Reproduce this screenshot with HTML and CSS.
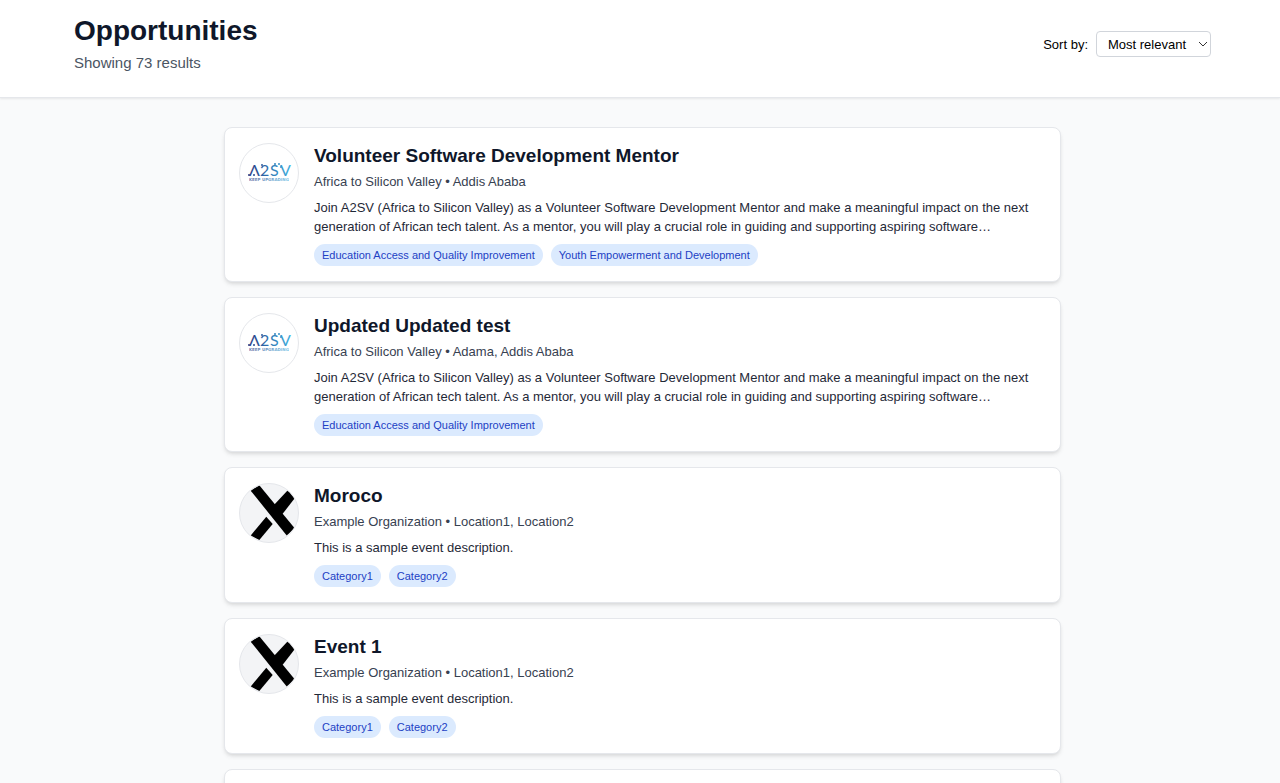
FILE: index.html
```html
<!DOCTYPE html>
<html lang="en">
<head>
<meta charset="utf-8">
<title>Opportunities</title>
<link rel="stylesheet" href="styles.css">
</head>
<body>
<svg class="defs" aria-hidden="true">
  <defs>
    <linearGradient id="brand" gradientUnits="userSpaceOnUse" x1="9" y1="0" x2="52" y2="0">
      <stop offset="0" stop-color="#2b3c85"/>
      <stop offset="0.5" stop-color="#2f78b5"/>
      <stop offset="1" stop-color="#45b4e2"/>
    </linearGradient>
    <symbol id="logo-a2sv" viewBox="0 0 58 58">
      <g fill="url(#brand)">
        <g class="wordmark">
          <text x="9" y="32">Λ</text>
          <text x="20" y="32">2</text>
          <text x="30" y="32">S</text>
          <text x="40" y="32">V</text>
        </g>
        <circle cx="9" cy="31" r="1"/>
        <circle cx="14" cy="31" r="1"/>
        <circle cx="22" cy="21" r="1"/>
        <circle cx="35" cy="20" r="1"/>
        <circle cx="39" cy="20" r="1"/>
        <circle cx="41" cy="23" r="1"/>
        <text class="tagline" x="9" y="37">KEEP UPGRADING</text>
      </g>
    </symbol>
    <symbol id="logo-x" viewBox="0 0 58 58">
      <path d="M10.7 6.7 19.3 1.3 54.7 44.3 46.7 51.4Z"/>
      <path d="M48 6 54.7 14.3 42.5 30 33 22Z"/>
      <path d="M26.3 32.7 32.7 40 19.3 56 10.7 51.4Z"/>
    </symbol>
  </defs>
</svg>
<header class="header">
  <div>
    <h1 class="heading">Opportunities</h1>
    <p class="count">Showing 73 results</p>
  </div>
  <div class="sort">
    <label for="sort">Sort by:</label>
    <div class="select-wrap">
      <select id="sort" class="select">
        <option>Most relevant</option>
        <option>Most recent</option>
      </select>
      <svg class="chevron" viewBox="0 0 10 6" aria-hidden="true"><path d="M1 1 5 5 9 1"/></svg>
    </div>
  </div>
</header>
<main class="list">
  <article class="card">
    <svg class="logo" role="img" aria-label="Africa to Silicon Valley"><use href="#logo-a2sv"/></svg>
    <div class="body">
      <h2 class="title">Volunteer Software Development Mentor</h2>
      <p class="org">Africa to Silicon Valley • Addis Ababa</p>
      <p class="desc">Join A2SV (Africa to Silicon Valley) as a Volunteer Software Development Mentor and make a meaningful impact on the next generation of African tech talent. As a mentor, you will play a crucial role in guiding and supporting aspiring software…</p>
      <div class="tags"><span class="tag">Education Access and Quality Improvement</span><span class="tag">Youth Empowerment and Development</span></div>
    </div>
  </article>
  <article class="card">
    <svg class="logo" role="img" aria-label="Africa to Silicon Valley"><use href="#logo-a2sv"/></svg>
    <div class="body">
      <h2 class="title">Updated Updated test</h2>
      <p class="org">Africa to Silicon Valley • Adama, Addis Ababa</p>
      <p class="desc">Join A2SV (Africa to Silicon Valley) as a Volunteer Software Development Mentor and make a meaningful impact on the next generation of African tech talent. As a mentor, you will play a crucial role in guiding and supporting aspiring software…</p>
      <div class="tags"><span class="tag">Education Access and Quality Improvement</span></div>
    </div>
  </article>
  <article class="card">
    <svg class="logo logo-grey" role="img" aria-label="Example Organization"><use href="#logo-x"/></svg>
    <div class="body">
      <h2 class="title">Moroco</h2>
      <p class="org">Example Organization • Location1, Location2</p>
      <p class="desc">This is a sample event description.</p>
      <div class="tags"><span class="tag">Category1</span><span class="tag">Category2</span></div>
    </div>
  </article>
  <article class="card">
    <svg class="logo logo-grey" role="img" aria-label="Example Organization"><use href="#logo-x"/></svg>
    <div class="body">
      <h2 class="title">Event 1</h2>
      <p class="org">Example Organization • Location1, Location2</p>
      <p class="desc">This is a sample event description.</p>
      <div class="tags"><span class="tag">Category1</span><span class="tag">Category2</span></div>
    </div>
  </article>
  <article class="card"></article>
</main>
</body>
</html>
```
FILE: styles.css
```css
* { box-sizing: border-box; }
body {
  margin: 0;
  height: 100vh;
  overflow: hidden;
  background: #f9fafb;
  color: #111827;
  font-family: "Liberation Sans", Arial, sans-serif;
  font-size: 13px;
}
h1, h2, p { margin: 0; }
.defs { position: absolute; width: 0; height: 0; }
.header {
  display: flex;
  justify-content: space-between;
  align-items: flex-start;
  padding: 14px 69px 22px 74px;
  background: #fff;
  border-bottom: 1px solid #e5e7eb;
  box-shadow: 0 1px 2px rgba(0, 0, 0, 0.08);
}
.heading { font-size: 28px; line-height: 34px; color: #0f172a; }
.count { margin-top: 3px; font-size: 15px; line-height: 24px; color: #4b5563; }
.sort { display: flex; align-items: center; gap: 8px; padding-top: 17px; color: #000; }
.select-wrap { position: relative; }
.select {
  display: block;
  appearance: none;
  width: 115px;
  height: 26px;
  padding: 0 20px 0 11px;
  border: 1px solid #d1d5db;
  border-radius: 4px;
  background: #fff;
  color: #000;
  font: inherit;
}
.chevron {
  position: absolute;
  right: 3px;
  top: 10px;
  width: 10px;
  height: 6px;
  fill: none;
  stroke: #333;
  pointer-events: none;
}
.list {
  display: flex;
  flex-direction: column;
  gap: 15px;
  max-width: 842px;
  margin: 0 auto;
  padding: 29px 0 30px 5px;
}
.card {
  display: flex;
  flex-shrink: 0;
  gap: 15px;
  min-height: 136px;
  padding: 14px 14px 15px;
  background: #fff;
  border: 1px solid #e5e7eb;
  border-radius: 8px;
  box-shadow: 0 3px 5px -1px rgba(0, 0, 0, 0.1), 0 2px 4px -2px rgba(0, 0, 0, 0.1);
}
.logo {
  flex: none;
  width: 60px;
  height: 60px;
  margin-top: 1px;
  border: 1px solid #e5e7eb;
  border-radius: 50%;
  background: #fff;
}
.logo-grey { background: #f3f4f6; }
.wordmark { font-family: Lato, sans-serif; font-size: 16px; }
.tagline { font-family: "DejaVu Sans", sans-serif; font-size: 4px; font-weight: 700; opacity: 0.7; }
.body { flex: 1; min-width: 0; }
.title { font-size: 19px; line-height: 27px; color: #0f172a; }
.org { margin-top: 4px; line-height: 18px; color: #374151; }
.desc { margin-top: 7px; line-height: 19px; color: #1f2937; }
.tags { display: flex; flex-wrap: wrap; gap: 8px; margin-top: 8px; }
.tag {
  padding: 0 8px;
  border-radius: 11px;
  background: #dbeafe;
  color: #1d3fc4;
  font-size: 11px;
  line-height: 22px;
}
```
